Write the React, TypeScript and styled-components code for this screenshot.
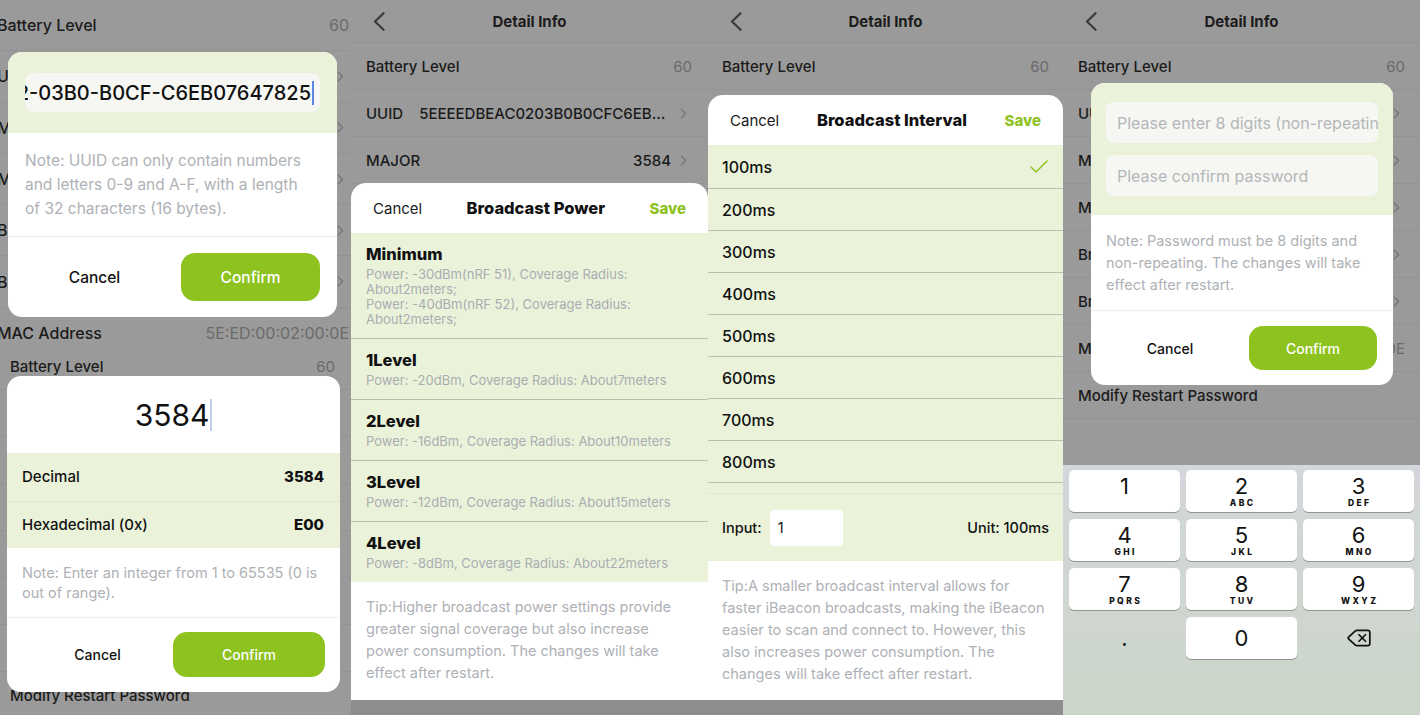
import React from "react";
import styled, { createGlobalStyle } from "styled-components";
import { Check, ChevronRight, Delete } from "lucide-react";

const GREEN = "#8dc21f";
const LIGHT_GREEN = "#eaf3da";
const DIM = "#9a9a9a";
const NOTE = "#aeb1b6";
const LINE = "#b9bfae";

const GlobalStyle = createGlobalStyle`
  html, body {
    margin: 0;
    padding: 0;
    background: #8e8e8e;
  }
  body {
    font-family: Inter, "Noto Sans", sans-serif;
    -webkit-font-smoothing: antialiased;
  }
  * {
    box-sizing: border-box;
  }
`;

const Board = styled.div`
  display: flex;
  width: 1420px;
  height: 715px;
  overflow: hidden;
  background: #8e8e8e;
`;

const Column = styled.div<{ $w: number }>`
  width: ${(p) => p.$w}px;
  flex: none;
  display: flex;
  flex-direction: column;
`;

const Screen = styled.div<{ $h: number }>`
  position: relative;
  height: ${(p) => p.$h}px;
  flex: none;
  overflow: hidden;
  background: ${DIM};
`;

/* ---------- dimmed detail list behind the popups ---------- */

const ListWrap = styled.div<{ $shift: number; $ml: number }>`
  margin-top: ${(p) => p.$shift}px;
  margin-left: ${(p) => p.$ml}px;
`;

const NavBar = styled.div`
  height: 43px;
  display: grid;
  grid-template-columns: 70px 1fr 70px;
  align-items: center;
  border-bottom: 1px solid rgba(0, 0, 0, 0.05);
`;

const BackButton = styled.div`
  padding-left: 22px;
  display: flex;
  align-items: center;
`;

const NavTitle = styled.div`
  text-align: center;
  font-size: 15px;
  font-weight: 700;
  color: #1c1c1c;
  padding-top: 1px;
`;

const InfoRow = styled.div<{ $h: number; $fs: number; $pl: number; $pr: number }>`
  height: ${(p) => p.$h}px;
  display: flex;
  align-items: center;
  padding: 0 ${(p) => p.$pr}px 0 ${(p) => p.$pl}px;
  border-bottom: 1px solid rgba(0, 0, 0, 0.05);
  font-size: ${(p) => p.$fs}px;
  font-weight: 500;
  color: #1b1b1b;
`;

const InfoLabel = styled.span`
  flex: none;
  white-space: nowrap;
`;

const InfoValue = styled.span<{ $muted?: boolean }>`
  flex: 1;
  min-width: 0;
  margin-left: 16px;
  text-align: right;
  white-space: nowrap;
  overflow: hidden;
  text-overflow: ellipsis;
  font-weight: ${(p) => (p.$muted ? 400 : 500)};
  color: ${(p) => (p.$muted ? "#6a6a6a" : "#1b1b1b")};
`;

const Arrow = styled.span`
  flex: none;
  display: flex;
  margin-left: 4px;
  color: #767676;
`;

type InfoItem = { label: string; value?: string; muted?: boolean; arrow?: boolean };

const INFO: InfoItem[] = [
  { label: "Battery Level", value: "60", muted: true },
  { label: "UUID", value: "5EEEEDBEAC0203B0B0CFC6EB07647825", arrow: true },
  { label: "MAJOR", value: "3584", arrow: true },
  { label: "MINOR", value: "1", arrow: true },
  { label: "Broadcast Power", value: "", arrow: true },
  { label: "Broadcast Interval", value: "", arrow: true },
  { label: "MAC Address", value: "5E:ED:00:02:00:0E", muted: true },
  { label: "Modify Restart Password" },
];

const BackChevron = () => (
  <svg width="12" height="19" viewBox="0 0 12 19" fill="none">
    <polyline
      points="10.5,1.2 2,9.5 10.5,17.8"
      stroke="#3a3a3a"
      strokeWidth="2.2"
      strokeLinecap="round"
      strokeLinejoin="round"
    />
  </svg>
);

type ListProps = {
  nav?: boolean;
  fs?: number;
  rowH?: number;
  pl?: number;
  pr?: number;
  shift?: number;
  ml?: number;
};

const DetailList = ({ nav, fs = 15, rowH = 47, pl = 15, pr = 15, shift = 0, ml = 0 }: ListProps) => (
  <ListWrap $shift={shift} $ml={ml}>
    {nav && (
      <NavBar>
        <BackButton>
          <BackChevron />
        </BackButton>
        <NavTitle>Detail Info</NavTitle>
        <div />
      </NavBar>
    )}
    {INFO.map((item) => (
      <InfoRow key={item.label} $h={rowH} $fs={fs} $pl={pl} $pr={pr}>
        <InfoLabel>{item.label}</InfoLabel>
        <InfoValue $muted={item.muted}>{item.value}</InfoValue>
        {item.arrow && (
          <Arrow>
            <ChevronRight size={17} strokeWidth={1.8} />
          </Arrow>
        )}
      </InfoRow>
    ))}
  </ListWrap>
);

/* ---------- centered dialogs ---------- */

const Dialog = styled.div<{ $x: number; $y: number; $w: number }>`
  position: absolute;
  left: ${(p) => p.$x}px;
  top: ${(p) => p.$y}px;
  width: ${(p) => p.$w}px;
  background: #fff;
  border-radius: 14px;
  overflow: hidden;
  display: flex;
  flex-direction: column;
`;

const FieldArea = styled.div<{ $pad: string; $gap?: number }>`
  background: ${LIGHT_GREEN};
  padding: ${(p) => p.$pad};
  display: flex;
  flex-direction: column;
  gap: ${(p) => p.$gap ?? 0}px;
`;

const UuidField = styled.div`
  height: 39px;
  border-radius: 8px;
  background: #f6f7f3;
  display: flex;
  align-items: center;
  justify-content: flex-end;
  overflow: hidden;
  padding: 0 6px;
  font-size: 20px;
  font-weight: 500;
  color: #111;
  white-space: nowrap;
`;

const FieldText = styled.span`
  flex: none;
`;

const Caret = styled.span<{ $h: number }>`
  flex: none;
  display: inline-block;
  width: 2px;
  height: ${(p) => p.$h}px;
  margin-left: 1px;
  background: #5b86e5;
  vertical-align: middle;
`;

const PasswordField = styled.div`
  height: 41px;
  border-radius: 8px;
  background: #f6f7f3;
  display: flex;
  align-items: center;
  padding: 0 12px 0 11px;
  overflow: hidden;
  white-space: nowrap;
  font-size: 16px;
  color: #b4b6b9;
`;

const BigNumber = styled.div`
  height: 77px;
  display: flex;
  align-items: center;
  justify-content: center;
  font-size: 30px;
  color: #111;
`;

const SoftCaret = styled.span`
  display: inline-block;
  width: 2px;
  height: 32px;
  margin-left: 1px;
  background: #c3cff0;
`;

const BaseRow = styled.div`
  height: 47.5px;
  display: flex;
  align-items: center;
  justify-content: space-between;
  padding: 0 16px 0 15px;
  background: ${LIGHT_GREEN};
  font-size: 15px;
  font-weight: 500;
  color: #111;
  & + & {
    border-top: 1px solid #dfe7d2;
  }
`;

const BaseValue = styled.span`
  font-weight: 800;
`;

const Note = styled.div<{ $fs: number; $lh: number; $pad: string }>`
  padding: ${(p) => p.$pad};
  font-size: ${(p) => p.$fs}px;
  line-height: ${(p) => p.$lh}px;
  color: ${NOTE};
  white-space: nowrap;
  border-bottom: 1px solid #eeeeee;
`;

const ButtonBar = styled.div<{ $pad: string }>`
  display: flex;
  align-items: center;
  padding: ${(p) => p.$pad};
`;

const CancelButton = styled.div<{ $fs: number }>`
  flex: 1;
  text-align: center;
  font-size: ${(p) => p.$fs}px;
  font-weight: 500;
  color: #111;
`;

const ConfirmButton = styled.div<{ $w: number; $h: number; $fs: number }>`
  width: ${(p) => p.$w}px;
  height: ${(p) => p.$h}px;
  flex: none;
  border-radius: 14px;
  background: ${GREEN};
  color: #fff;
  font-size: ${(p) => p.$fs}px;
  font-weight: 500;
  display: flex;
  align-items: center;
  justify-content: center;
`;

/* ---------- bottom sheets ---------- */

const Sheet = styled.div<{ $top: number }>`
  position: absolute;
  left: 0;
  right: 0;
  top: ${(p) => p.$top}px;
  bottom: 0;
  background: #fff;
  border-radius: 15px 15px 0 0;
  overflow: hidden;
  display: flex;
  flex-direction: column;
`;

const SheetHeader = styled.div`
  height: 50px;
  flex: none;
  display: flex;
  align-items: center;
  justify-content: space-between;
  padding: 0 22px;
`;

const HeaderCancel = styled.span`
  font-size: 15px;
  color: #1a1a1a;
`;

const HeaderTitle = styled.span`
  font-size: 16.5px;
  font-weight: 800;
  color: #111;
`;

const HeaderSave = styled.span`
  font-size: 15px;
  font-weight: 800;
  color: ${GREEN};
`;

const OptionList = styled.div`
  background: ${LIGHT_GREEN};
`;

const PowerOption = styled.div`
  padding: 11px 15px 11px;
  & + & {
    border-top: 1px solid ${LINE};
  }
`;

const OptionTitle = styled.div`
  font-size: 16.5px;
  line-height: 20px;
  font-weight: 800;
  color: #111;
`;

const OptionDesc = styled.div`
  margin-top: 3px;
  font-size: 13px;
  line-height: 15px;
  color: #a9adb2;
  span {
    display: block;
  }
`;

const Tip = styled.div<{ $pad: string }>`
  padding: ${(p) => p.$pad};
  font-size: 14.5px;
  line-height: 22px;
  color: ${NOTE};
  white-space: nowrap;
`;

const IntervalScroller = styled.div`
  height: 348px;
  overflow: hidden;
  background: ${LIGHT_GREEN};
`;

const IntervalRow = styled.div<{ $first?: boolean }>`
  height: ${(p) => (p.$first ? 44 : 42)}px;
  display: flex;
  align-items: center;
  justify-content: space-between;
  padding: 0 12px 0 14px;
  border-bottom: 1px solid ${LINE};
  font-size: 16px;
  font-weight: 500;
  color: #111;
`;

const InputLine = styled.div`
  height: 68px;
  display: flex;
  align-items: center;
  padding: 0 14px;
  background: ${LIGHT_GREEN};
  border-top: 1px solid #dfe7d2;
  font-size: 14.5px;
  font-weight: 500;
  color: #111;
`;

const SmallInput = styled.div`
  width: 73px;
  height: 36px;
  margin-left: 8px;
  border-radius: 4px;
  background: #fff;
  display: flex;
  align-items: center;
  padding-left: 8px;
  font-size: 14.5px;
  font-weight: 400;
`;

const UnitText = styled.span`
  margin-left: auto;
`;

/* ---------- number pad ---------- */

const Keypad = styled.div`
  position: absolute;
  left: 0;
  right: 0;
  bottom: 0;
  height: 250px;
  padding: 5px 6px 0;
  background: linear-gradient(180deg, #d3d6db 0%, #cfd6d0 55%, #cbd6c9 100%);
  display: grid;
  grid-template-columns: repeat(3, 1fr);
  grid-auto-rows: 42px;
  column-gap: 6px;
  row-gap: 7px;
`;

const Key = styled.div<{ $plain?: boolean }>`
  border-radius: 5px;
  background: ${(p) => (p.$plain ? "transparent" : "#fff")};
  box-shadow: ${(p) => (p.$plain ? "none" : "0 1px 0 rgba(0, 0, 0, 0.3)")};
  display: flex;
  flex-direction: column;
  align-items: center;
  justify-content: center;
  color: #111;
`;

const KeyDigit = styled.span`
  font-size: 22px;
  line-height: 24px;
  font-weight: 400;
`;

const KeyLetters = styled.span`
  height: 11px;
  font-size: 8.5px;
  line-height: 11px;
  font-weight: 800;
  letter-spacing: 2.4px;
  padding-left: 2.4px;
`;

const KEYS = [
  ["1", ""],
  ["2", "ABC"],
  ["3", "DEF"],
  ["4", "GHI"],
  ["5", "JKL"],
  ["6", "MNO"],
  ["7", "PQRS"],
  ["8", "TUV"],
  ["9", "WXYZ"],
];

/* ---------- screens ---------- */

const UuidScreen = () => (
  <Screen $h={355}>
    <DetailList fs={16} rowH={51.3} pl={0} pr={2} ml={-3} />
    <Dialog $x={8} $y={52} $w={329}>
      <FieldArea $pad="21px 17px">
        <UuidField>
          <FieldText>5EEEEDBE-AC02-03B0-B0CF-C6EB07647825</FieldText>
          <Caret $h={24} />
        </UuidField>
      </FieldArea>
      <Note $fs={15.5} $lh={24} $pad="16px 17px 15px">
        Note: UUID can only contain numbers
        <br />
        and letters 0-9 and A-F, with a length
        <br />
        of 32 characters (16 bytes).
      </Note>
      <ButtonBar $pad="16px 17px 16px 0">
        <CancelButton $fs={15.5}>Cancel</CancelButton>
        <ConfirmButton $w={139} $h={48} $fs={15.5}>
          Confirm
        </ConfirmButton>
      </ButtonBar>
    </Dialog>
  </Screen>
);

const MajorScreen = () => (
  <Screen $h={360}>
    <DetailList fs={15} rowH={47} pl={10} pr={16} shift={-12} />
    <Dialog $x={7} $y={21} $w={333}>
      <BigNumber>
        3584
        <SoftCaret />
      </BigNumber>
      <BaseRow>
        <span>Decimal</span>
        <BaseValue>3584</BaseValue>
      </BaseRow>
      <BaseRow>
        <span>Hexadecimal (0x)</span>
        <BaseValue>E00</BaseValue>
      </BaseRow>
      <Note $fs={14.5} $lh={20} $pad="15px 15px 14px">
        Note: Enter an integer from 1 to 65535 (0 is
        <br />
        out of range).
      </Note>
      <ButtonBar $pad="14px 15px 15px 15px">
        <CancelButton $fs={14}>Cancel</CancelButton>
        <ConfirmButton $w={152} $h={45} $fs={14}>
          Confirm
        </ConfirmButton>
      </ButtonBar>
    </Dialog>
  </Screen>
);

const POWER = [
  { title: "1Level", desc: "Power: -20dBm, Coverage Radius: About7meters" },
  { title: "2Level", desc: "Power: -16dBm, Coverage Radius: About10meters" },
  { title: "3Level", desc: "Power: -12dBm, Coverage Radius: About15meters" },
  { title: "4Level", desc: "Power: -8dBm, Coverage Radius: About22meters" },
];

const PowerScreen = () => (
  <Screen $h={700}>
    <DetailList nav pl={15} pr={16} />
    <Sheet $top={183}>
      <SheetHeader>
        <HeaderCancel>Cancel</HeaderCancel>
        <HeaderTitle>Broadcast Power</HeaderTitle>
        <HeaderSave>Save</HeaderSave>
      </SheetHeader>
      <OptionList>
        <PowerOption>
          <OptionTitle>Minimum</OptionTitle>
          <OptionDesc>
            <span>Power: -30dBm(nRF 51), Coverage Radius: About2meters;</span>
            <span>Power: -40dBm(nRF 52), Coverage Radius: About2meters;</span>
          </OptionDesc>
        </PowerOption>
        {POWER.map((o) => (
          <PowerOption key={o.title}>
            <OptionTitle>{o.title}</OptionTitle>
            <OptionDesc>{o.desc}</OptionDesc>
          </PowerOption>
        ))}
      </OptionList>
      <Tip $pad="14px 15px">
        Tip:Higher broadcast power settings provide
        <br />
        greater signal coverage but also increase
        <br />
        power consumption. The changes will take
        <br />
        effect after restart.
      </Tip>
    </Sheet>
  </Screen>
);

const INTERVALS = ["100ms", "200ms", "300ms", "400ms", "500ms", "600ms", "700ms", "800ms", "900ms"];

const IntervalScreen = () => (
  <Screen $h={700}>
    <DetailList nav pl={14} pr={14} />
    <Sheet $top={95}>
      <SheetHeader>
        <HeaderCancel>Cancel</HeaderCancel>
        <HeaderTitle>Broadcast Interval</HeaderTitle>
        <HeaderSave>Save</HeaderSave>
      </SheetHeader>
      <IntervalScroller>
        {INTERVALS.map((v, i) => (
          <IntervalRow key={v} $first={i === 0}>
            <span>{v}</span>
            {i === 0 && <Check size={24} strokeWidth={1.5} color={GREEN} />}
          </IntervalRow>
        ))}
      </IntervalScroller>
      <InputLine>
        Input:
        <SmallInput>1</SmallInput>
        <UnitText>Unit: 100ms</UnitText>
      </InputLine>
      <Tip $pad="14px 14px">
        Tip:A smaller broadcast interval allows for
        <br />
        faster iBeacon broadcasts, making the iBeacon
        <br />
        easier to scan and connect to. However, this
        <br />
        also increases power consumption. The
        <br />
        changes will take effect after restart.
      </Tip>
    </Sheet>
  </Screen>
);

const PasswordScreen = () => (
  <Screen $h={715}>
    <DetailList nav pl={15} pr={15} />
    <Dialog $x={28} $y={83} $w={302}>
      <FieldArea $pad="19px 15px" $gap={12}>
        <PasswordField>Please enter 8 digits (non-repeating)</PasswordField>
        <PasswordField>Please confirm password</PasswordField>
      </FieldArea>
      <Note $fs={14.5} $lh={22} $pad="15px 15px 14px">
        Note: Password must be 8 digits and
        <br />
        non-repeating. The changes will take
        <br />
        effect after restart.
      </Note>
      <ButtonBar $pad="15px 16px 15px 0">
        <CancelButton $fs={14}>Cancel</CancelButton>
        <ConfirmButton $w={128} $h={44} $fs={14}>
          Confirm
        </ConfirmButton>
      </ButtonBar>
    </Dialog>
    <Keypad>
      {KEYS.map(([d, l]) => (
        <Key key={d}>
          <KeyDigit>{d}</KeyDigit>
          <KeyLetters>{l}</KeyLetters>
        </Key>
      ))}
      <Key $plain>
        <KeyDigit>.</KeyDigit>
      </Key>
      <Key>
        <KeyDigit>0</KeyDigit>
      </Key>
      <Key $plain>
        <Delete size={26} strokeWidth={1.6} />
      </Key>
    </Keypad>
  </Screen>
);

export default function App() {
  return (
    <>
      <GlobalStyle />
      <Board>
        <Column $w={351}>
          <UuidScreen />
          <MajorScreen />
        </Column>
        <Column $w={357}>
          <PowerScreen />
        </Column>
        <Column $w={355}>
          <IntervalScreen />
        </Column>
        <Column $w={357}>
          <PasswordScreen />
        </Column>
      </Board>
    </>
  );
}
